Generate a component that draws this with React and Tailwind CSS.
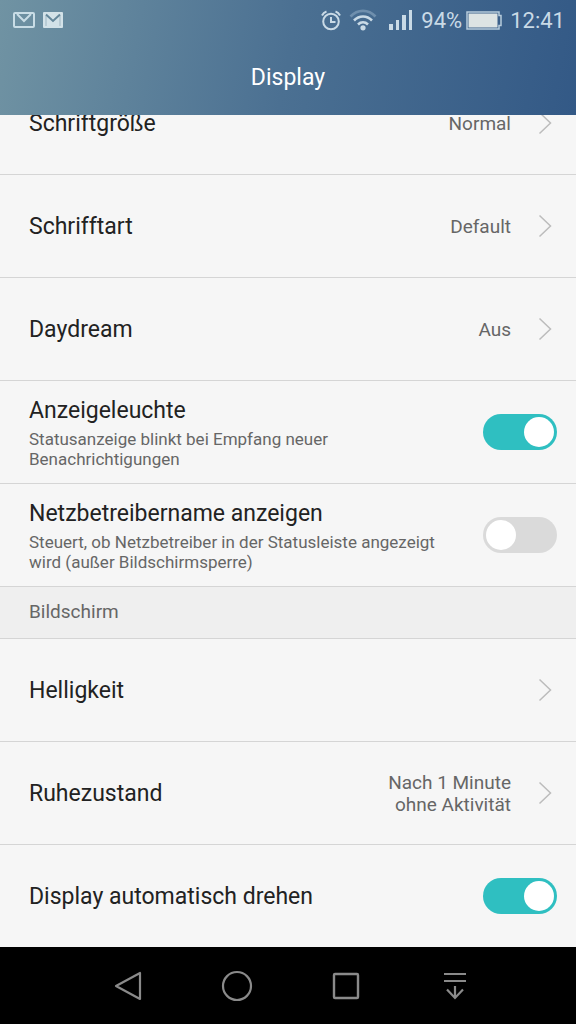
import { useState } from "react";

const MailIcon = () => (
  <svg width="22" height="16" viewBox="0 0 22 16" fill="none" stroke="#c9dde6" strokeWidth="2">
    <rect x="1" y="1" width="20" height="14" rx="1" />
    <path d="M4 2 11 9l7-7" />
  </svg>
);

const GmailIcon = () => (
  <svg width="20" height="16" viewBox="0 0 20 16" fill="none">
    <rect width="20" height="16" rx="1" fill="#d3e2e8" />
    <path d="M3 14V3.500M17 14V3.500" stroke="#9fb6c2" strokeWidth="1" />
    <path d="M3 2.500 10 9l7-6.500" stroke="#64879a" strokeWidth="2" />
  </svg>
);

const AlarmIcon = () => (
  <svg width="20" height="21" viewBox="0 0 20 21" fill="none" stroke="#c9dae6" strokeWidth="2">
    <circle cx="10" cy="11.500" r="7.800" />
    <path d="M10 7v5h4.500M1 5.500C2 3.500 3.500 2.200 5.500 1.500M19 5.500C18 3.500 16.500 2.200 14.500 1.500" />
  </svg>
);

const WifiIcon = () => (
  <svg width="28" height="22" viewBox="0 0 28 22" fill="none" stroke="#c9dae6" strokeWidth="2.600">
    <path d="M1.500 7.500C8.500 0 19.500 0 26.500 7.500" stroke="#6f8fad" />
    <path d="M5 11.500c5.200-5.300 12.800-5.300 18 0M9 15.500c3-2.800 7-2.800 10 0" />
    <circle cx="14" cy="18.800" r="2.600" fill="#c9dae6" stroke="none" />
  </svg>
);

const SignalIcon = () => (
  <svg width="24" height="20" viewBox="0 0 24 20" fill="#c9dae6">
    <rect x="0" y="14" width="4" height="6" />
    <rect x="7" y="10" width="3" height="10" />
    <rect x="13" y="5" width="4" height="15" />
    <rect x="20" y="0" width="3" height="20" />
  </svg>
);

const BatteryIcon = () => (
  <svg width="36" height="19" viewBox="0 0 36 19" fill="none">
    <path d="M1 1h32v3.500h2v10h-2V18H1z" stroke="#b7cbdc" strokeWidth="1.500" />
    <rect x="2.500" y="2.500" width="29" height="14" fill="#dde4e4" />
  </svg>
);

const Chevron = () => (
  <svg width="14" height="24" viewBox="0 0 14 24" fill="none" stroke="#bcbcbc" strokeWidth="1.500">
    <path d="M1.500 1.500 12.500 12l-11 10.500" />
  </svg>
);

const rowClass =
  "flex min-h-[103px] w-full shrink-0 items-center justify-between border-t border-[#d5d5d5] pl-[29px] text-left";

const titleClass = "pt-0.5 text-[23px] leading-7 text-[#222222]";

const LinkRow = ({ title, value }) => (
  <button type="button" className={`${rowClass} pr-6`}>
    <span className={titleClass}>{title}</span>
    <span className="flex items-center gap-[27px]">
      <span className="max-w-36 pt-0.5 text-right text-[19px] leading-[22px] text-[#666666]">{value}</span>
      <Chevron />
    </span>
  </button>
);

const SwitchRow = ({ title, text, on }) => {
  const [checked, setChecked] = useState(on);

  return (
    <label className={`${rowClass} gap-6 pr-[19px]`}>
      <span className="flex flex-col gap-1">
        <span className={titleClass}>{title}</span>
        {text && <span className="text-[17px] leading-5 text-[#666666]">{text}</span>}
      </span>
      <span className="flex shrink-0">
        <input
          type="checkbox"
          role="switch"
          checked={checked}
          onChange={(e) => setChecked(e.target.checked)}
          className="peer sr-only"
        />
        <span className="flex h-9 w-[74px] items-center rounded-full bg-[#dadada] px-[3px] peer-checked:justify-end peer-checked:bg-[#2fbfc1]">
          <span className="size-[30px] rounded-full bg-white" />
        </span>
      </span>
    </label>
  );
};

const NavBar = () => (
  <nav className="flex h-[77px] shrink-0 items-center justify-center gap-[77px] bg-black pl-1.5">
    <button type="button" aria-label="Zurück">
      <svg width="32" height="32" viewBox="0 0 32 32" fill="none" stroke="#8a8a8a" strokeWidth="2.200" strokeLinejoin="round">
        <path d="M28 3v26L4 16z" />
      </svg>
    </button>
    <button type="button" aria-label="Startseite">
      <svg width="32" height="32" viewBox="0 0 32 32" fill="none" stroke="#8a8a8a" strokeWidth="2.200">
        <circle cx="16" cy="16" r="14" />
      </svg>
    </button>
    <button type="button" aria-label="Übersicht">
      <svg width="32" height="32" viewBox="0 0 32 32" fill="none" stroke="#8a8a8a" strokeWidth="2.400">
        <rect x="4" y="4" width="24" height="24" rx="1" />
      </svg>
    </button>
    <button type="button" aria-label="Benachrichtigungen">
      <svg width="32" height="32" viewBox="0 0 32 32" fill="none" stroke="#8a8a8a" strokeWidth="2.200">
        <path d="M5 4h22M5 11h22M16 16v12M8 19.500l8 8.500 8-8.500" />
      </svg>
    </button>
  </nav>
);

export default function App() {
  return (
    <div className="flex h-screen flex-col bg-[#f6f6f6] font-['Roboto',sans-serif]">
      <header className="h-[115px] shrink-0 bg-linear-100 from-[#7093a3] via-[#4b7092] to-[#335986]">
        <div className="flex h-10 items-center justify-between pr-[11px] pl-[13px] text-[22px] text-[#c9dae6]">
          <div className="flex items-center gap-2">
            <MailIcon />
            <GmailIcon />
          </div>
          <div className="flex items-center gap-2">
            <AlarmIcon />
            <span className="pr-1">
              <WifiIcon />
            </span>
            <SignalIcon />
            <span className="flex items-center gap-1">
              94%
              <BatteryIcon />
            </span>
            <span>12:41</span>
          </div>
        </div>
        <h1 className="pt-6 text-center text-[23px] leading-7 text-white">Display</h1>
      </header>

      <main className="flex min-h-0 flex-1 flex-col justify-end overflow-hidden">
        <LinkRow title="Schriftgröße" value="Normal" />
        <LinkRow title="Schrifftart" value="Default" />
        <LinkRow title="Daydream" value="Aus" />
        <SwitchRow title="Anzeigeleuchte" text="Statusanzeige blinkt bei Empfang neuer Benachrichtigungen" on />
        <SwitchRow
          title="Netzbetreibername anzeigen"
          text="Steuert, ob Netzbetreiber in der Statusleiste angezeigt wird (außer Bildschirmsperre)"
          on={false}
        />
        <h2 className="flex min-h-[52px] shrink-0 items-center border-t border-[#d5d5d5] bg-[#efefef] px-[29px] text-[19px] text-[#666666]">
          Bildschirm
        </h2>
        <LinkRow title="Helligkeit" />
        <LinkRow title="Ruhezustand" value="Nach 1 Minute ohne Aktivität" />
        <SwitchRow title="Display automatisch drehen" on />
      </main>

      <NavBar />
    </div>
  );
}
